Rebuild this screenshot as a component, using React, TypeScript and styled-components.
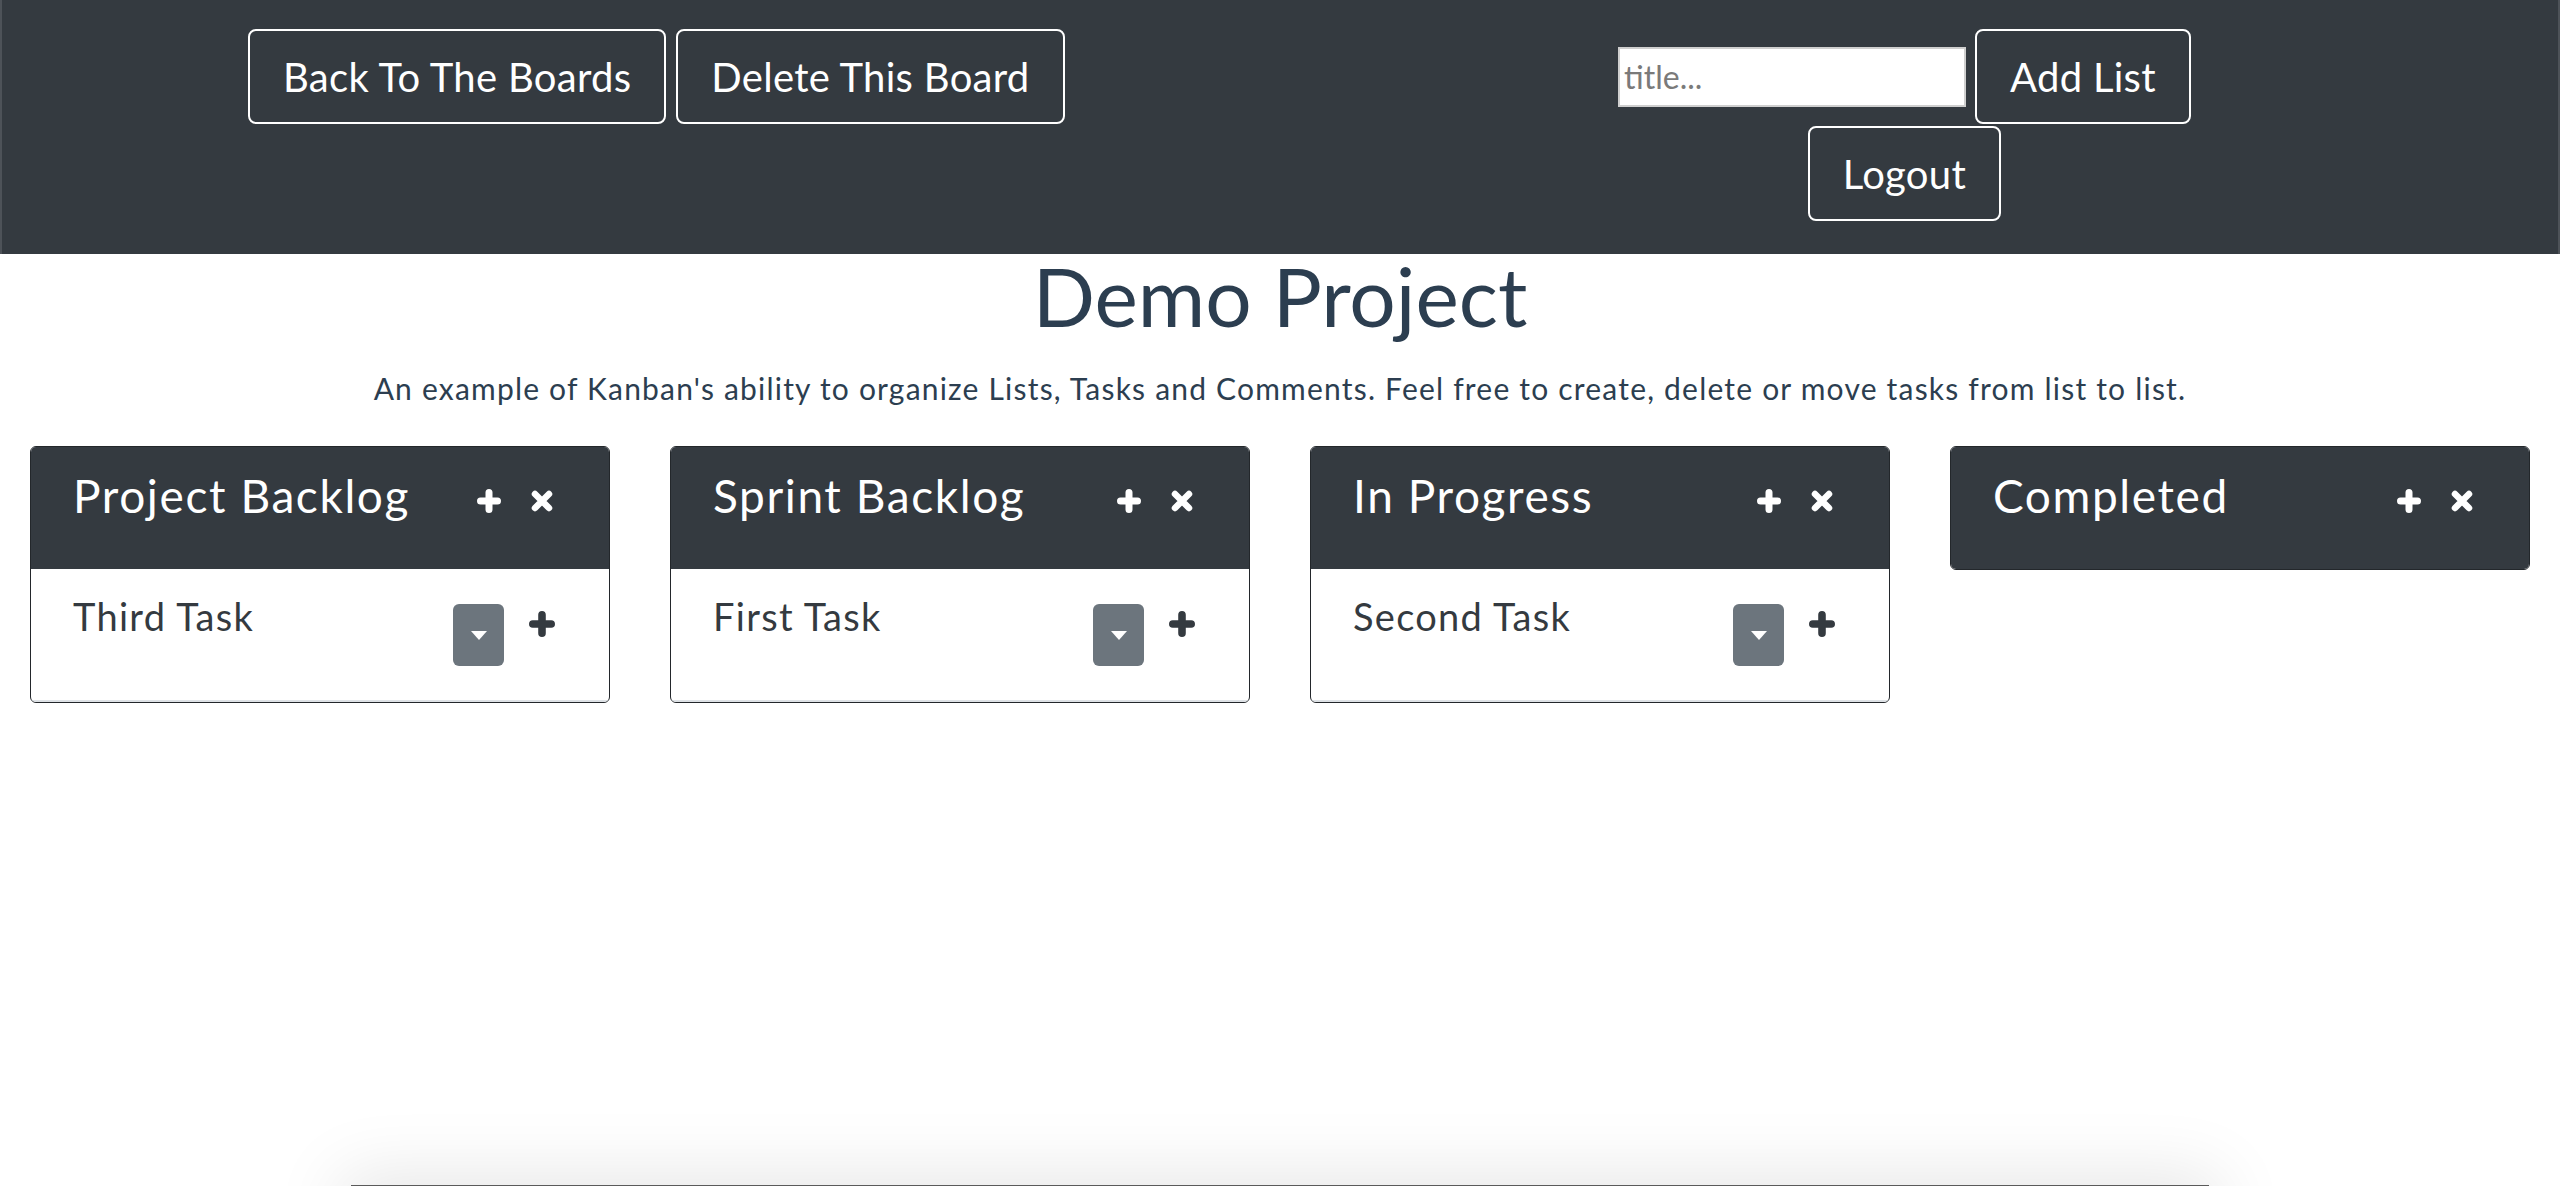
import React from "react";
import { styled, createGlobalStyle } from "styled-components";

const GlobalStyle = createGlobalStyle`
  html, body {
    margin: 0;
    padding: 0;
    background: #fff;
  }
  body {
    font-family: Lato, "Open Sans", "Liberation Sans", sans-serif;
    color: #2c3e50;
  }
  * {
    box-sizing: border-box;
  }
`;

const Navbar = styled.header`
  background: #343a40;
  border-left: 2px solid #4d5258;
  border-right: 2px solid #4d5258;
  display: grid;
  grid-template-columns: 1370px auto;
  align-items: start;
  padding: 29px 0 33px 246px;
`;

const ButtonGroup = styled.div`
  display: flex;
  gap: 10px;
`;

const RightGroup = styled.div`
  justify-self: start;
  display: flex;
  flex-direction: column;
  align-items: center;
  gap: 2px;
`;

const FormRow = styled.form`
  display: flex;
  align-items: center;
  gap: 9px;
`;

const OutlineButton = styled.button`
  height: 95px;
  padding: 0 33px;
  background: transparent;
  border: 2px solid #fff;
  border-radius: 8px;
  color: #fff;
  font-family: inherit;
  font-size: 40px;
  font-weight: 400;
  letter-spacing: 0.3px;
  cursor: pointer;
`;

const TitleInput = styled.input`
  width: 348px;
  height: 60px;
  padding: 0 4px;
  border: 2px solid #cfcfcf;
  background: #fff;
  font-family: inherit;
  font-size: 32px;
  color: #333;
  outline: none;

  &::placeholder {
    color: #7a7a7a;
  }
`;

const Main = styled.main`
  text-align: center;
`;

const BoardTitle = styled.h1`
  margin: 0;
  font-size: 82px;
  line-height: 82px;
  font-weight: 400;
  color: #2c3e50;
`;

const BoardDescription = styled.p`
  margin: 34px 0 40px;
  font-size: 30px;
  line-height: 36px;
  letter-spacing: 1.2px;
  color: #2c3e50;
`;

const ListsGrid = styled.div`
  display: grid;
  grid-template-columns: repeat(4, 1fr);
  align-items: start;
  text-align: left;
`;

const ListCard = styled.section`
  margin: 0 30px;
  border: 1px solid #23272b;
  border-radius: 6px;
  overflow: hidden;
  background: #fff;
`;

const ListHeader = styled.div`
  display: flex;
  justify-content: space-between;
  align-items: flex-start;
  background: #343a40;
  padding: 21px 56px 46px 42px;
`;

const ListTitle = styled.h2`
  margin: 0;
  font-size: 46px;
  line-height: 55px;
  font-weight: 400;
  letter-spacing: 1.6px;
  color: #fff;
`;

const HeaderIcons = styled.div`
  display: flex;
  align-items: center;
  gap: 30px;
  margin-top: 21px;
`;

const IconButton = styled.button<{ $color: string }>`
  display: flex;
  padding: 0;
  border: none;
  background: transparent;
  color: ${(p) => p.$color};
  cursor: pointer;
`;

const TaskRow = styled.div`
  display: flex;
  justify-content: space-between;
  align-items: flex-start;
  padding: 24px 54px 34px 42px;
  border-bottom: 2px solid #dee2e6;
`;

const TaskName = styled.span`
  font-size: 38px;
  line-height: 46px;
  letter-spacing: 1.3px;
  color: #343a40;
`;

const TaskActions = styled.div`
  display: flex;
  align-items: flex-start;
  gap: 25px;
  margin-top: 11px;
`;

const DropdownToggle = styled.button`
  width: 51px;
  height: 62px;
  display: flex;
  align-items: center;
  justify-content: center;
  padding: 0;
  border: none;
  border-radius: 6px;
  background: #6c757d;
  cursor: pointer;
`;

const AddTaskButton = styled(IconButton)`
  margin-top: 7px;
`;

const BottomSheet = styled.div`
  position: fixed;
  left: 351px;
  bottom: -60px;
  width: 1858px;
  height: 61px;
  background: #fff;
  border-top: 2px solid #5a5a5a;
  box-shadow: 0 0 70px 10px rgba(0, 0, 0, 0.1);
`;

const PlusIcon = ({ size = 24 }: { size?: number }) => (
  <svg width={size} height={size} viewBox="0 0 24 24">
    <path
      d="M12 3.5V20.5M3.5 12H20.5"
      stroke="currentColor"
      strokeWidth={7}
      strokeLinecap="round"
      fill="none"
    />
  </svg>
);

const TimesIcon = () => (
  <svg width={22} height={22} viewBox="0 0 22 22">
    <path
      d="M4 4L18 18M18 4L4 18"
      stroke="currentColor"
      strokeWidth={6.5}
      strokeLinecap="round"
      fill="none"
    />
  </svg>
);

const Caret = () => (
  <svg width={16} height={9} viewBox="0 0 16 9">
    <path d="M0 0H16L8 9Z" fill="#fff" />
  </svg>
);

type List = { title: string; tasks: string[] };

const lists: List[] = [
  { title: "Project Backlog", tasks: ["Third Task"] },
  { title: "Sprint Backlog", tasks: ["First Task"] },
  { title: "In Progress", tasks: ["Second Task"] },
  { title: "Completed", tasks: [] },
];

export default function App() {
  return (
    <>
      <GlobalStyle />
      <Navbar>
        <ButtonGroup>
          <OutlineButton>Back To The Boards</OutlineButton>
          <OutlineButton>Delete This Board</OutlineButton>
        </ButtonGroup>
        <RightGroup>
          <FormRow onSubmit={(e) => e.preventDefault()}>
            <TitleInput placeholder="title..." />
            <OutlineButton type="submit">Add List</OutlineButton>
          </FormRow>
          <OutlineButton>Logout</OutlineButton>
        </RightGroup>
      </Navbar>
      <Main>
        <BoardTitle>Demo Project</BoardTitle>
        <BoardDescription>
          An example of Kanban's ability to organize Lists, Tasks and Comments. Feel free to
          create, delete or move tasks from list to list.
        </BoardDescription>
        <ListsGrid>
          {lists.map((list) => (
            <ListCard key={list.title}>
              <ListHeader>
                <ListTitle>{list.title}</ListTitle>
                <HeaderIcons>
                  <IconButton $color="#fff">
                    <PlusIcon />
                  </IconButton>
                  <IconButton $color="#fff">
                    <TimesIcon />
                  </IconButton>
                </HeaderIcons>
              </ListHeader>
              {list.tasks.map((task) => (
                <TaskRow key={task}>
                  <TaskName>{task}</TaskName>
                  <TaskActions>
                    <DropdownToggle>
                      <Caret />
                    </DropdownToggle>
                    <AddTaskButton $color="#343a40">
                      <PlusIcon size={26} />
                    </AddTaskButton>
                  </TaskActions>
                </TaskRow>
              ))}
            </ListCard>
          ))}
        </ListsGrid>
      </Main>
      <BottomSheet />
    </>
  );
}
